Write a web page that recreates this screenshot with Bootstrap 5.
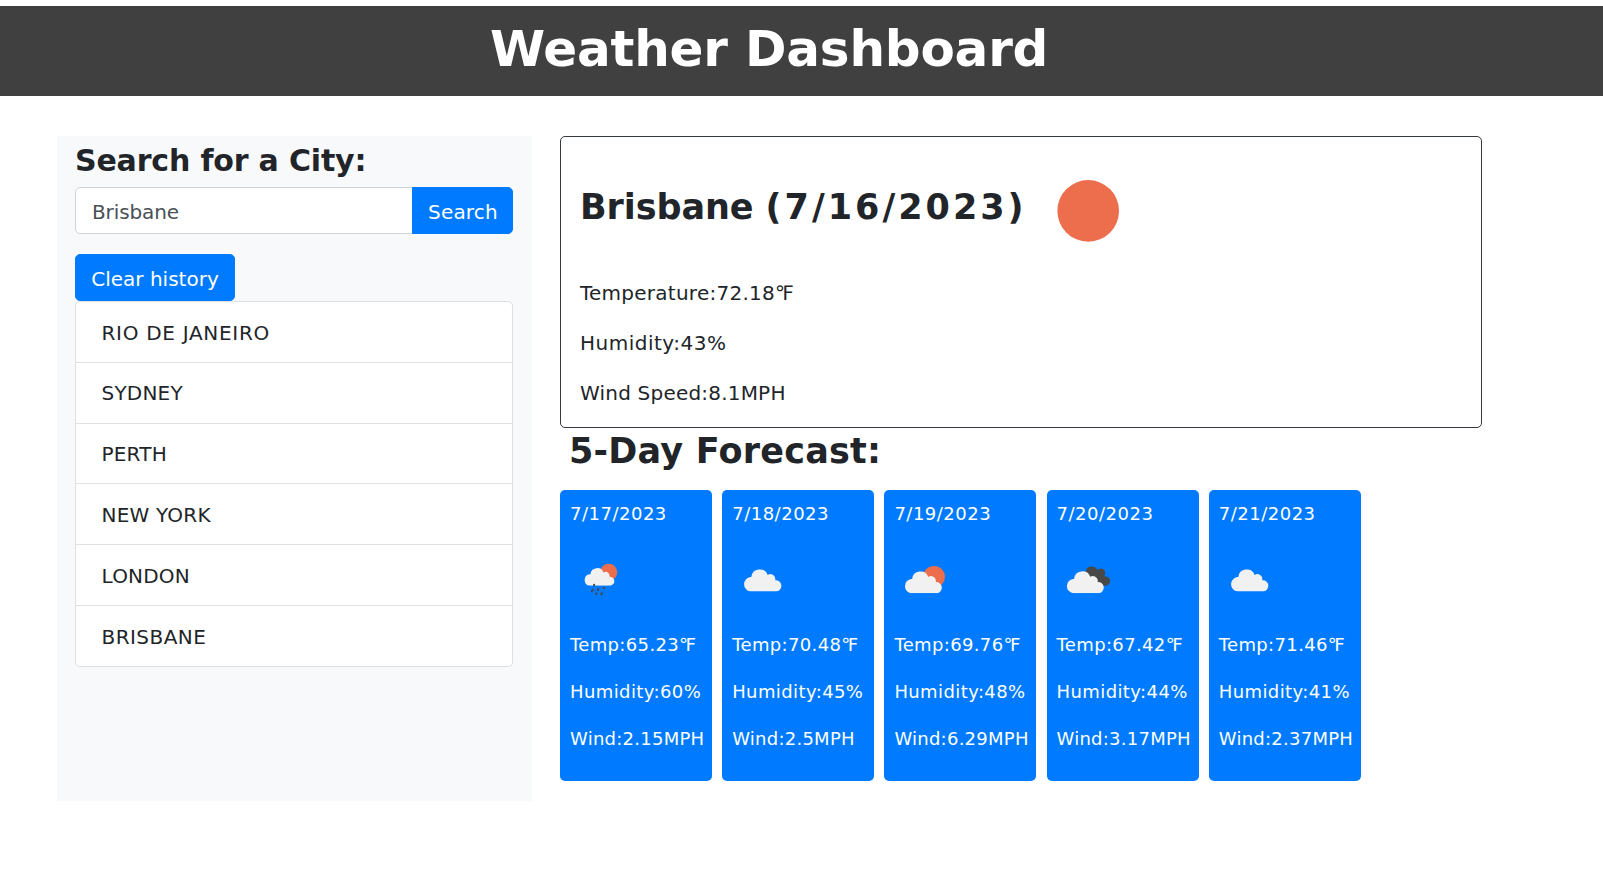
<!DOCTYPE html>
<html lang="en">
<head>
<meta charset="utf-8">
<meta name="viewport" content="width=device-width, initial-scale=1">
<title>Weather Dashboard</title>
<link href="https://cdn.jsdelivr.net/npm/bootstrap@5.3.0/dist/css/bootstrap.min.css" rel="stylesheet">
<style>
  :root { --brand: #007bff; }
  body { font-family: "DejaVu Sans", Verdana, sans-serif; font-size: 20px; line-height: 30px; color: #212529; overflow: hidden; }
  .site-header { height: 90px; margin-top: 6px; padding: 13px 0 0 490px; background: #404040; }
  .site-header h1 { font-size: 50px; line-height: 60px; letter-spacing: -.19px; }
  .dashboard { padding: 40px 0 0 57px; gap: 28px; }
  .search-panel { width: 475px; height: 665px; padding: 7px 19px 0 18px; background: #f8f9fa; }
  .search-panel h2 { font-size: 30px; line-height: 36px; margin-bottom: 8px; letter-spacing: -.17px; }
  .search-panel .form-control { height: 47px; padding: 10px 15px 7px 16px; font-size: 20px; line-height: 28px; color: #495057; border-color: #ced4da; border-radius: 5px; letter-spacing: -.1px; }
  .btn-brand { height: 47px; padding: 10px 15px 7px; font-size: 20px; line-height: 28px; color: #fff; background: var(--brand); border-color: var(--brand); border-radius: 5px; }
  .btn-find { width: 101px; letter-spacing: .2px; }
  .btn-clear { width: 160px; white-space: nowrap; margin-top: 20px; }
  .history { --bs-list-group-border-color: #dfdfdf; --bs-list-group-border-radius: 5px; --bs-list-group-color: #212529; letter-spacing: .2px; }
  .history .list-group-item { padding: 16.5px 25px 13.4px 25.5px; line-height: 29.93px; }
  .history .wide { letter-spacing: .7px; }
  .history .wide-s { letter-spacing: .45px; }
  .today { width: 922px; height: 292px; padding: 43px 19px 0; border: 1px solid #343a40; border-radius: 5px; }
  .today-top { height: 98px; }
  .today h2 { width: 477px; margin: 6px 0 0; font-size: 35px; line-height: 42px; white-space: nowrap; letter-spacing: -.08px; }
  .today h2 span { letter-spacing: 3px; }
  .today p, .day p { margin-bottom: 20px; }
  .ls-t { letter-spacing: .25px; }
  .ls-h { letter-spacing: .5px; }
  .ls-w { letter-spacing: .2px; }
  .forecast-title { margin: 2px 0 18px 9px; font-size: 35px; line-height: 42px; letter-spacing: .22px; }
  .forecast { gap: 10.2px; }
  .day { width: 152px; height: 291px; padding: 10px 0 0 10px; font-size: 18px; line-height: 27px; color: #fff; background: var(--brand); border-radius: 5px; white-space: nowrap; letter-spacing: .35px; }
  .day .date { letter-spacing: .5px; }
  .day .hum { letter-spacing: .4px; }
  .day .wind { letter-spacing: .25px; }
  .day svg { display: block; margin: 21px 0 19.5px; }
</style>
</head>
<body>
<svg width="0" height="0" class="position-absolute" aria-hidden="true">
  <symbol id="cloud" viewBox="0 0 39 24">
    <path fill="#f1f1f1" d="M7.2 24A7.2 7.2 0 0 1 7.2 9.7H8A8.4 8.4 0 0 1 24.2 7.6A5 5 0 0 1 31.7 12.8A5.6 5.6 0 1 1 32.6 24Z"/>
  </symbol>
</svg>

<header class="site-header"><h1 class="fw-bold text-white mb-0">Weather Dashboard</h1></header>

<main class="dashboard d-flex align-items-start">
  <aside class="search-panel flex-shrink-0">
    <h2 class="fw-bold">Search for a City:</h2>
    <div class="input-group flex-nowrap">
      <input type="text" class="form-control" value="Brisbane" aria-label="City">
      <button class="btn btn-brand btn-find" type="button">Search</button>
    </div>
    <button class="btn btn-brand btn-clear d-block" type="button">Clear history</button>
    <ul class="list-group history">
      <li class="list-group-item wide">RIO DE JANEIRO</li>
      <li class="list-group-item">SYDNEY</li>
      <li class="list-group-item">PERTH</li>
      <li class="list-group-item">NEW YORK</li>
      <li class="list-group-item">LONDON</li>
      <li class="list-group-item wide-s">BRISBANE</li>
    </ul>
  </aside>

  <section class="flex-shrink-0">
    <div class="today">
      <div class="today-top d-flex align-items-start">
        <h2 class="fw-bold">Brisbane <span>(7/16/2023)</span></h2>
        <svg width="63" height="62" viewBox="0 0 63 62"><circle cx="31.2" cy="30.9" r="30.8" fill="#ec6e4c"/></svg>
      </div>
      <p class="ls-t">Temperature:72.18℉</p>
      <p class="ls-h">Humidity:43%</p>
      <p class="ls-w">Wind Speed:8.1MPH</p>
    </div>

    <h2 class="forecast-title fw-bold">5-Day Forecast:</h2>
    <div class="forecast d-flex">
      <div class="day">
        <p class="date mb-0">7/17/2023</p>
        <svg width="63" height="63" viewBox="0 0 63 63">
          <circle cx="38.7" cy="24.2" r="8.5" fill="#ec6e4c"/>
          <use href="#cloud" x="14" y="18.2" width="31.4" height="19.6"/>
          <g stroke="#484848" stroke-width="2" stroke-linecap="round">
            <path d="M24.2 36.8l-.2.6M28.4 40.8l-.7 1.4M22.8 41.6l-.8 1.5M33.9 39.6l-.3.6M32 45l-.6 1.2M26.5 45.4l-.3.6"/>
          </g>
        </svg>
        <p>Temp:65.23℉</p><p class="hum">Humidity:60%</p><p class="wind">Wind:2.15MPH</p>
      </div>
      <div class="day">
        <p class="date mb-0">7/18/2023</p>
        <svg width="63" height="63" viewBox="0 0 63 63"><use href="#cloud" x="11.2" y="19.2" width="39.4" height="24.3"/></svg>
        <p>Temp:70.48℉</p><p class="hum">Humidity:45%</p><p class="wind">Wind:2.5MPH</p>
      </div>
      <div class="day">
        <p class="date mb-0">7/19/2023</p>
        <svg width="63" height="63" viewBox="0 0 63 63">
          <circle cx="40" cy="28.8" r="10.9" fill="#ec6e4c"/>
          <use href="#cloud" x="10.1" y="21.3" width="39" height="24"/>
        </svg>
        <p>Temp:69.76℉</p><p class="hum">Humidity:48%</p><p class="wind">Wind:6.29MPH</p>
      </div>
      <div class="day">
        <p class="date mb-0">7/20/2023</p>
        <svg width="63" height="63" viewBox="0 0 63 63">
          <path fill="#484848" d="M28.6 23.5A6.2 6.2 0 0 1 40.3 22A4 4 0 0 1 47 28.4A4.8 4.8 0 1 1 48.6 37.8H34Z"/>
          <use href="#cloud" x="9" y="21.2" width="39" height="24"/>
        </svg>
        <p>Temp:67.42℉</p><p class="hum">Humidity:44%</p><p class="wind">Wind:3.17MPH</p>
      </div>
      <div class="day">
        <p class="date mb-0">7/21/2023</p>
        <svg width="63" height="63" viewBox="0 0 63 63"><use href="#cloud" x="11.2" y="19.2" width="39.4" height="24.3"/></svg>
        <p>Temp:71.46℉</p><p class="hum">Humidity:41%</p><p class="wind">Wind:2.37MPH</p>
      </div>
    </div>
  </section>
</main>
<script src="https://cdn.jsdelivr.net/npm/bootstrap@5.3.0/dist/js/bootstrap.bundle.min.js"></script>
</body>
</html>
